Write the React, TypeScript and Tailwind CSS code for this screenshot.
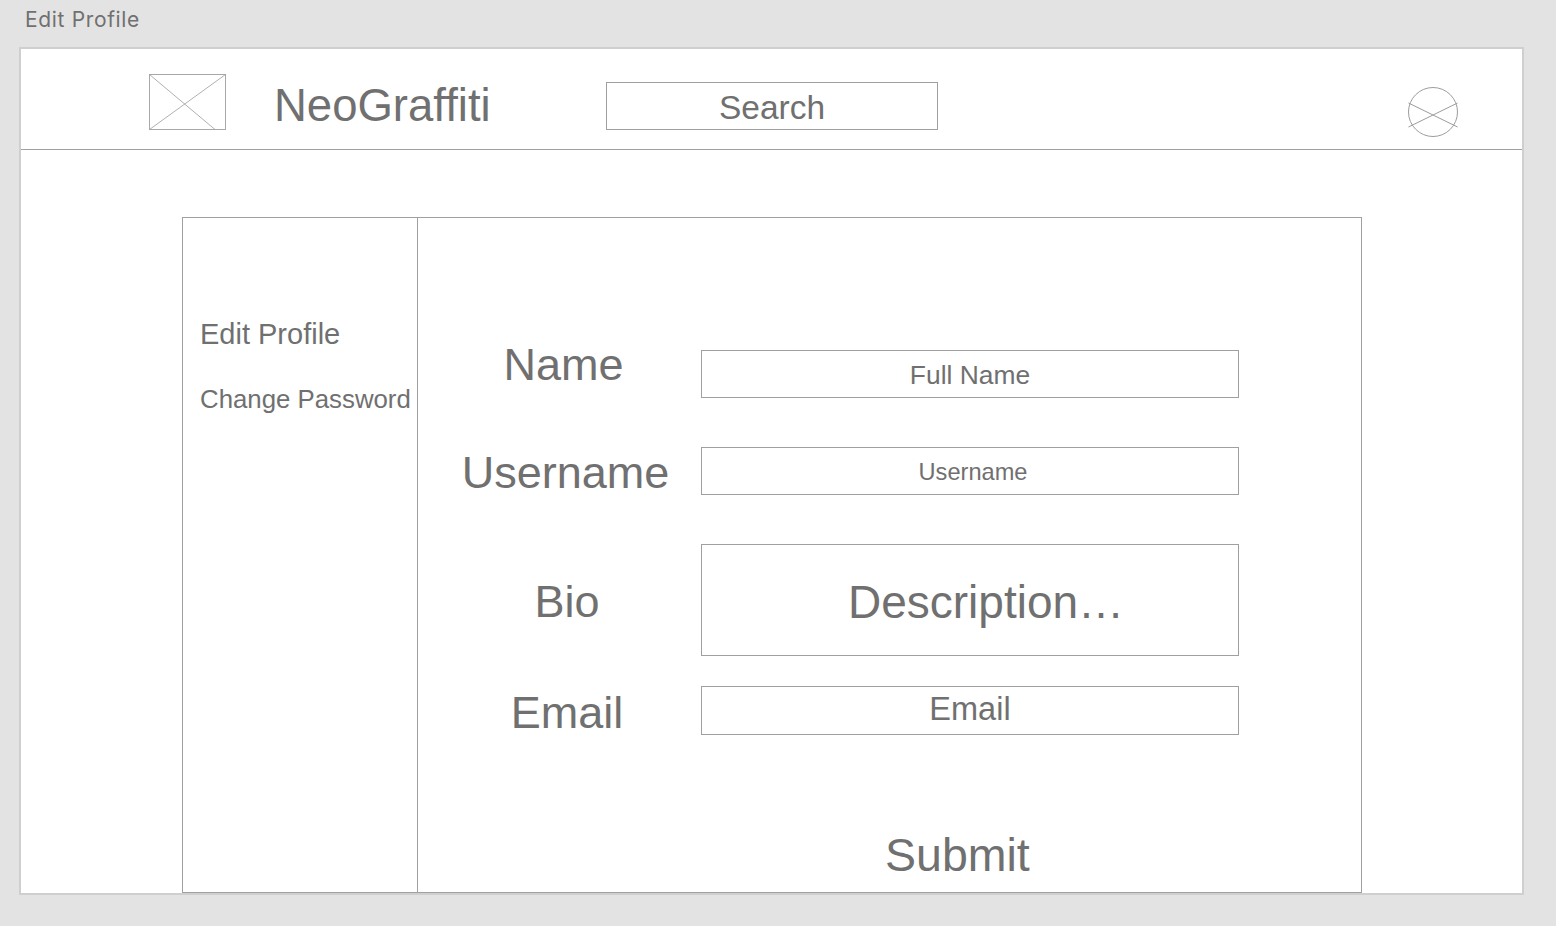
const sans = "font-['Liberation_Sans',Arial,sans-serif]";

const LogoPlaceholder = () => (
  <svg width="77" height="56" viewBox="0 0 77 56" className="block shrink-0">
    <rect x="0.5" y="0.5" width="76" height="55" fill="none" stroke="#a8a8a8" />
    <path d="M0.5 0.5L66 55.5M76.5 0.5L0.5 55.5" fill="none" stroke="#9c9c9c" strokeWidth="0.8" />
  </svg>
);

const AvatarPlaceholder = () => (
  <svg width="52" height="50" viewBox="0 0 52 50" className="block shrink-0">
    <circle cx="26" cy="25" r="24.5" fill="none" stroke="#9c9c9c" />
    <path d="M1.5 16L50.5 40M1.5 40L50.5 16" fill="none" stroke="#9c9c9c" />
  </svg>
);

type FieldProps = {
  label: string;
  placeholder: string;
  rowClass: string;
  labelClass: string;
  boxClass: string;
  textClass: string;
};

const Field = ({ label, placeholder, rowClass, labelClass, boxClass, textClass }: FieldProps) => (
  <div className={`flex items-start ${rowClass}`}>
    <div className={`w-[283px] shrink-0 pl-[15px] text-center text-[45px] leading-[52px] text-[#707070] ${labelClass}`}>
      {label}
    </div>
    <div className={`flex w-[538px] justify-center border border-[#a0a0a0] text-[#707070] ${boxClass}`}>
      <span className={textClass}>{placeholder}</span>
    </div>
  </div>
);

export default function App() {
  return (
    <div className={`h-[926px] w-[1556px] overflow-hidden bg-[#e3e3e3] ${sans}`}>
      <div className="h-[47px] pl-[25px] pt-[6px] font-['Inter',sans-serif] text-[21px] leading-[28px] tracking-[0.66px] text-[#707070]">
        Edit Profile
      </div>
      <div className="ml-[19px] flex h-[848px] w-[1505px] flex-col border-2 border-[#cfcfcf] bg-white">
        <header className="flex h-[101px] shrink-0 items-start border-b border-[#a0a0a0]">
          <div className="ml-[128px] mt-[25px]">
            <LogoPlaceholder />
          </div>
          <div className="ml-[48px] mt-[31px] w-[332px] text-[45.5px] leading-[52px] text-[#707070]">NeoGraffiti</div>
          <div className="mt-[33px] flex h-[48px] w-[332px] items-center justify-center border border-[#a0a0a0] pt-[4px] text-[33.5px] text-[#707070]">
            Search
          </div>
          <div className="ml-auto mr-[63px] mt-[38px]">
            <AvatarPlaceholder />
          </div>
        </header>

        <main className="ml-[161px] mt-[67px] flex h-[676px] w-[1180px] border border-[#a0a0a0]">
          <aside className="w-[235px] shrink-0 border-r border-[#a0a0a0] pl-[17px] pt-[98px] text-[#707070]">
            <div className="text-[29px] leading-[36px]">Edit Profile</div>
            <div className="mt-[30px] whitespace-nowrap text-[25.8px] leading-[34px]">Change Password</div>
          </aside>

          <section className="min-w-0 flex-1 pt-[132px]">
            <Field
              label="Name"
              placeholder="Full Name"
              rowClass=""
              labelClass="pr-[7px] mt-[-11px] mb-[7px]"
              boxClass="h-[48px] items-center"
              textClass="text-[26.4px] pt-[3px]"
            />
            <Field
              label="Username"
              placeholder="Username"
              rowClass="mt-[49px]"
              labelClass="pr-[3px] mb-[-4px]"
              boxClass="h-[48px] items-center"
              textClass="text-[23.6px] pl-[6px] pt-[3px]"
            />
            <Field
              label="Bio"
              placeholder="Description…"
              rowClass="mt-[49px]"
              labelClass="mt-[32px]"
              boxClass="h-[112px] items-center"
              textClass="text-[46px] pl-[32px] pt-[4px]"
            />
            <Field
              label="Email"
              placeholder="Email"
              rowClass="mt-[30px]"
              labelClass="mt-[1px]"
              boxClass="h-[49px] items-center"
              textClass="text-[32.5px] pb-[3px]"
            />
            <div className="ml-[467px] mt-[90px] text-[46.5px] leading-[52px] text-[#707070]">Submit</div>
          </section>
        </main>
      </div>
    </div>
  );
}
